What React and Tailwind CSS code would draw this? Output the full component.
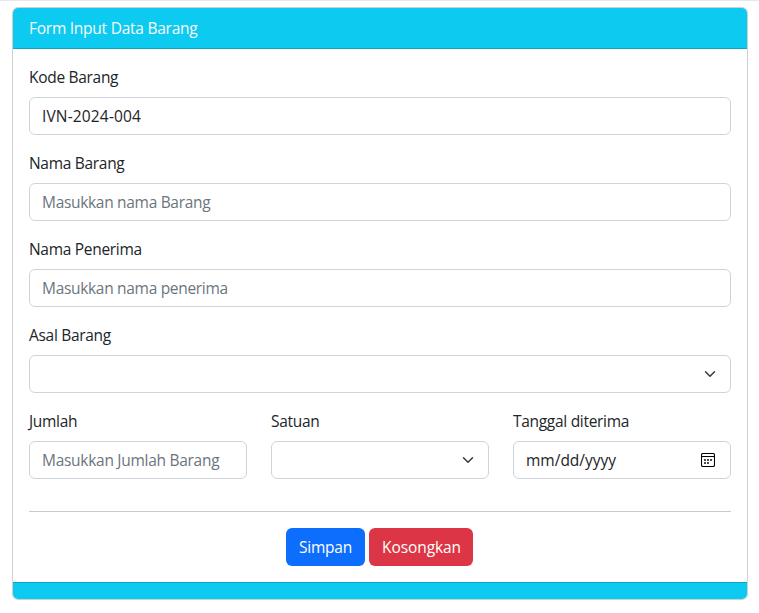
const control =
  "flex h-[38px] w-full items-center rounded-md border border-[#ced4da] bg-white px-3 text-[#212529]";

function Field({ label, children }) {
  return (
    <div className="mb-4 min-w-0">
      <label className="mb-2 block h-6 whitespace-nowrap tracking-[-0.3px]">{label}</label>
      {children}
    </div>
  );
}

function TextInput(props) {
  return (
    <input
      type="text"
      className={`${control} tracking-[0.15px] outline-none placeholder:tracking-[-0.31px] placeholder:text-[#6c757d]`}
      {...props}
    />
  );
}

function Select() {
  return (
    <div className={`${control} justify-end`}>
      <svg className="h-3 w-4" viewBox="0 0 16 16" width="16" height="12" fill="none">
        <path
          d="m2 5 6 6 6-6"
          stroke="#343a40"
          strokeWidth="2"
          strokeLinecap="round"
          strokeLinejoin="round"
        />
      </svg>
    </div>
  );
}

function CalendarIcon() {
  return (
    <svg width="14" height="14" viewBox="0 0 14 14" fill="none" className="mr-[3px]">
      <rect x="0.5" y="0.5" width="13" height="13" rx="1.5" stroke="#000" strokeWidth="1.1" />
      <path d="M1 3.5h12" stroke="#000" />
      <path d="M3 6h2v2H3zM6 6h2v2H6zM9 6h2v2H9zM3 9h2v2H3zM6 9h2v2H6z" fill="#4d4d4d" />
    </svg>
  );
}

export default function App() {
  return (
    <div className="h-[613px] border-t border-[#e8e8e8] bg-white px-3 pt-1.5 font-['Open_Sans','Noto_Sans',sans-serif] text-[15.5px] leading-6 text-[#212529]">
      <div className="w-[736px] overflow-hidden rounded-md border border-[#d0d0d0]">
        <div className="h-[41px] border-b border-[#0ba6c4] bg-[#0dcaf0] px-4 py-2 tracking-[-0.25px] text-[#f8f9fa]">
          Form Input Data Barang
        </div>
        <form className="p-4">
          <Field label="Kode Barang">
            <TextInput defaultValue="IVN-2024-004" />
          </Field>
          <Field label="Nama Barang">
            <TextInput placeholder="Masukkan nama Barang" />
          </Field>
          <Field label="Nama Penerima">
            <TextInput placeholder="Masukkan nama penerima" />
          </Field>
          <Field label="Asal Barang">
            <Select />
          </Field>
          <div className="grid grid-cols-3 gap-6">
            <Field label="Jumlah">
              <div className={control}>
                <span className="whitespace-nowrap tracking-[-0.28px] text-[#6c757d]">
                  Masukkan Jumlah Barang
                </span>
              </div>
            </Field>
            <Field label="Satuan">
              <Select />
            </Field>
            <Field label="Tanggal diterima">
              <div className={`${control} justify-between`}>
                <span>mm/dd/yyyy</span>
                <CalendarIcon />
              </div>
            </Field>
          </div>
          <hr className="my-4 border-[#c8c9ca]" />
          <div className="mr-px flex justify-center gap-1 text-white">
            <button
              type="button"
              className="h-[38px] w-[79px] rounded-md bg-[#0d6efd] tracking-[-0.2px]"
            >
              Simpan
            </button>
            <button
              type="button"
              className="h-[38px] w-[104px] rounded-md bg-[#dc3545] pl-px tracking-[-0.1px]"
            >
              Kosongkan
            </button>
          </div>
        </form>
        <div className="h-[17px] border-t border-[#0ba6c4] bg-[#0dcaf0]" />
      </div>
    </div>
  );
}
